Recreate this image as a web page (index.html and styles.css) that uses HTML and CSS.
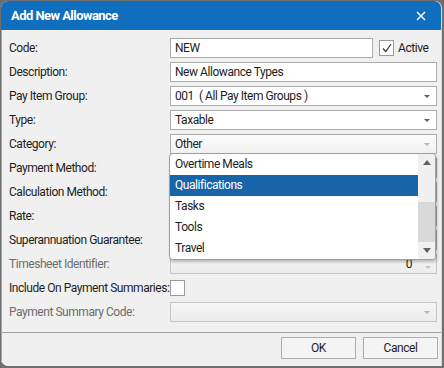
FILE: index.html
```html
<!DOCTYPE html>
<html lang="en">
<head>
    <meta charset="UTF-8">
    <title>Add New Allowance</title>
    <link rel="stylesheet" href="styles.css">
</head>
<body>
    <div class="dialog">
        <div class="titlebar">
            <span class="title">Add New Allowance</span>
            <svg class="close" width="10" height="10" viewBox="0 0 10 10">
                <path d="M1 1 L9 9 M9 1 L1 9" stroke="#fff" stroke-width="1.4"/>
            </svg>
        </div>

        <div class="form">
            <label>Code:</label>
            <div class="code-row">
                <div class="field">NEW</div>
                <div class="check checked">
                    <svg width="12" height="12" viewBox="0 0 12 12"><path d="M2 6.5 L4.8 9.5 L10 2" fill="none" stroke="#333" stroke-width="1.2"/></svg>
                </div>
                <span class="check-label">Active</span>
            </div>

            <label>Description:</label>
            <div class="field">New Allowance Types</div>

            <label>Pay Item Group:</label>
            <div class="field combo">001&nbsp; ( All Pay Item Groups )<i class="arrow"></i></div>

            <label>Type:</label>
            <div class="field combo">Taxable<i class="arrow"></i></div>

            <label>Category:</label>
            <div class="category-wrap">
                <div class="field combo open">Other<i class="arrow light"></i></div>
                <div class="dropdown">
                    <ul class="items">
                        <li>Overtime Meals</li>
                        <li class="selected">Qualifications</li>
                        <li>Tasks</li>
                        <li>Tools</li>
                        <li>Travel</li>
                    </ul>
                    <div class="scrollbar">
                        <i class="sb-up"></i>
                        <div class="track"><div class="thumb"></div></div>
                        <i class="sb-down"></i>
                    </div>
                </div>
            </div>

            <label>Payment Method:</label>
            <div class="field"></div>

            <label>Calculation Method:</label>
            <div class="field"></div>

            <label>Rate:</label>
            <div class="field"></div>

            <label>Superannuation Guarantee:</label>
            <div class="field"></div>

            <label class="disabled">Timesheet Identifier:</label>
            <div class="field spin disabled">0<span class="spin-arrows"><i class="up"></i><i class="down"></i></span></div>

            <label>Include On Payment Summaries:</label>
            <div><div class="check"></div></div>

            <label class="disabled">Payment Summary Code:</label>
            <div class="field combo disabled"><i class="arrow light"></i></div>
        </div>

        <div class="footer">
            <button class="btn">OK</button>
            <button class="btn">Cancel</button>
        </div>
    </div>
</body>
</html>
```

FILE: styles.css
```css
body {
    margin: 0;
    width: 444px;
    height: 368px;
    overflow: hidden;
    background-color: #6f6f70;
    font-family: Roboto, "Liberation Sans", sans-serif;
    font-size: 12px;
    letter-spacing: -0.45px;
    color: #1e1e1e;
}

.dialog {
    margin-left: 1px;
    margin-top: 1px;
    width: 440px;
    height: 365px;
    background-color: #f0f0f0;
    border-radius: 7px 7px 0 7px;
    overflow: hidden;
    display: flex;
    flex-direction: column;
    box-shadow: 1px 0 0 #d8d8d8;
}

.titlebar {
    height: 29px;
    flex: none;
    background-color: #106ebe;
    display: flex;
    align-items: center;
    justify-content: space-between;
    padding: 0 15px 0 10px;
    color: white;
}

.title {
    font-weight: bold;
    font-size: 13px;
    letter-spacing: -0.55px;
}

.form {
    flex: 1;
    display: grid;
    grid-template-columns: 161px 267px;
    grid-auto-rows: 20px;
    row-gap: 4px;
    padding: 8px 0 0 7px;
    border-left: 1px solid #a8a8a8;
    align-items: center;
}

.form label {
    white-space: nowrap;
}

.form label.disabled {
    color: #6d6d6d;
}

.field {
    height: 20px;
    box-sizing: border-box;
    border: 1px solid #ababab;
    background-color: white;
    padding: 0 4px;
    line-height: 18px;
    position: relative;
    white-space: nowrap;
}

.field.disabled {
    background: linear-gradient(#f6f6f6, #ececec);
    border-color: #c6c6c6;
}

.combo.open {
    background: linear-gradient(#fcfcfc, #f1f1f1);
}

.arrow {
    position: absolute;
    right: 6px;
    top: 8px;
    border-left: 3px solid transparent;
    border-right: 3px solid transparent;
    border-top: 3px solid #606060;
}

.arrow.light {
    border-top-color: #b8b8b8;
}

.code-row {
    display: flex;
    align-items: center;
}

.code-row .field {
    width: 203px;
}

.check {
    width: 15px;
    height: 16px;
    box-sizing: border-box;
    border: 1px solid #9a9a9a;
    background-color: white;
    display: flex;
    align-items: center;
    justify-content: center;
}

.code-row .check {
    margin-left: 6px;
}

.check-label {
    margin-left: 4px;
}

.category-wrap {
    position: relative;
}

.dropdown {
    position: absolute;
    left: -1px;
    top: 19px;
    width: 267px;
    height: 107px;
    box-sizing: border-box;
    border: 1px solid #a0a0a0;
    border-radius: 4px;
    background-color: white;
    box-shadow: 1px 2px 3px rgba(0, 0, 0, 0.25);
    display: flex;
    overflow: hidden;
    z-index: 2;
}

.items {
    list-style: none;
    margin: 0;
    padding: 0;
    flex: 1;
}

.items li {
    height: 21px;
    line-height: 21px;
    padding-left: 5px;
}

.items li.selected {
    background-color: #1764a8;
    color: white;
}

.scrollbar {
    width: 17px;
    background-color: #f0f0f0;
    display: flex;
    flex-direction: column;
    align-items: center;
}

.sb-up, .sb-down {
    flex: none;
    width: 0;
    height: 5px;
    box-sizing: border-box;
    border-left: 4px solid transparent;
    border-right: 4px solid transparent;
    margin: 6px 0;
}

.sb-up {
    border-bottom: 5px solid #606060;
}

.sb-down {
    border-top: 5px solid #606060;
}

.track {
    flex: 1;
    width: 17px;
    padding-top: 31px;
    box-sizing: border-box;
}

.thumb {
    height: 40px;
    background-color: #d9d9d9;
}

.spin {
    text-align: right;
    padding-right: 24px;
}

.spin-arrows {
    position: absolute;
    right: 5px;
    top: 2px;
    display: flex;
    flex-direction: column;
    gap: 6px;
}

.spin-arrows .up {
    border-left: 3px solid transparent;
    border-right: 3px solid transparent;
    border-bottom: 3px solid #c4c4c4;
}

.spin-arrows .down {
    border-left: 3px solid transparent;
    border-right: 3px solid transparent;
    border-top: 3px solid #c4c4c4;
}

.footer {
    height: 29px;
    flex: none;
    border-top: 1px solid #a0a0a0;
    border-left: 1px solid #a8a8a8;
    display: flex;
    justify-content: flex-end;
    align-items: flex-start;
    gap: 7px;
    padding: 4px 3px 0 0;
}

.btn {
    width: 75px;
    height: 22px;
    border: 1px solid #adadad;
    background-color: #f4f4f4;
    font-family: inherit;
    font-size: 12px;
    letter-spacing: -0.45px;
    color: #1e1e1e;
    padding: 0;
}
```
